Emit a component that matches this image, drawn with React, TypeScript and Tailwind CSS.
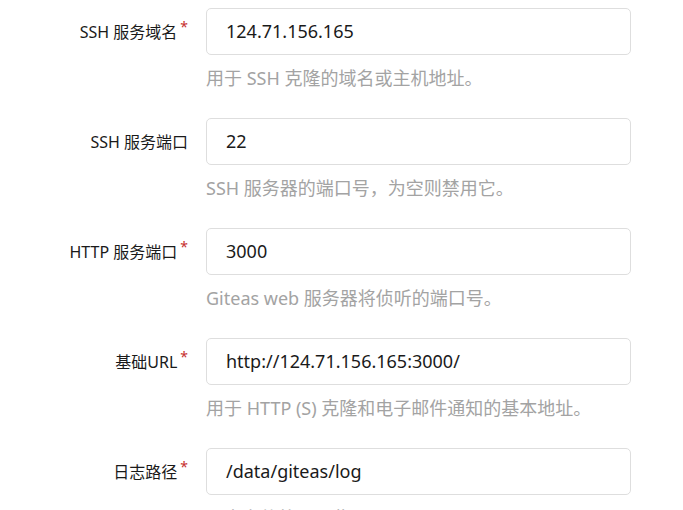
const fields = [
  { label: "SSH 服务域名", required: true, value: "124.71.156.165", help: "用于 SSH 克隆的域名或主机地址。" },
  { label: "SSH 服务端口", required: false, value: "22", help: "SSH 服务器的端口号，为空则禁用它。" },
  { label: "HTTP 服务端口", required: true, value: "3000", help: "Giteas web 服务器将侦听的端口号。" },
  { label: "基础URL", required: true, value: "http://124.71.156.165:3000/", help: "用于 HTTP (S) 克隆和电子邮件通知的基本地址。" },
  { label: "日志路径", required: true, value: "/data/giteas/log", help: "日志文件将写入此目录。" },
];

export default function App() {
  return (
    <div
      className="h-[510px] w-[683px] overflow-hidden bg-white pt-2"
      style={{ fontFamily: '"Noto Sans", "Noto Sans CJK SC", sans-serif' }}
    >
      {fields.map((f) => (
        <div key={f.label} className="mb-[29px] flex">
          <div className="flex h-[47px] w-[188px] shrink-0 items-center justify-end text-[16px] text-[#1a1a1a]">
            <span>{f.label}</span>
            {f.required && (
              <span className="ml-[3px] -mt-[10px] text-[14px] leading-none text-[#c62f2f]">*</span>
            )}
          </div>
          <div className="ml-[18px] w-[425px]">
            <div className="flex h-[47px] items-center rounded-[5px] border border-[#dedede] bg-white pl-[19px] text-[18px] text-[#1a1a1a]">
              {f.value}
            </div>
            <div className="mt-[12px] whitespace-nowrap text-[18px] leading-[22px] text-[#a3a3a3]">{f.help}</div>
          </div>
        </div>
      ))}
    </div>
  );
}
